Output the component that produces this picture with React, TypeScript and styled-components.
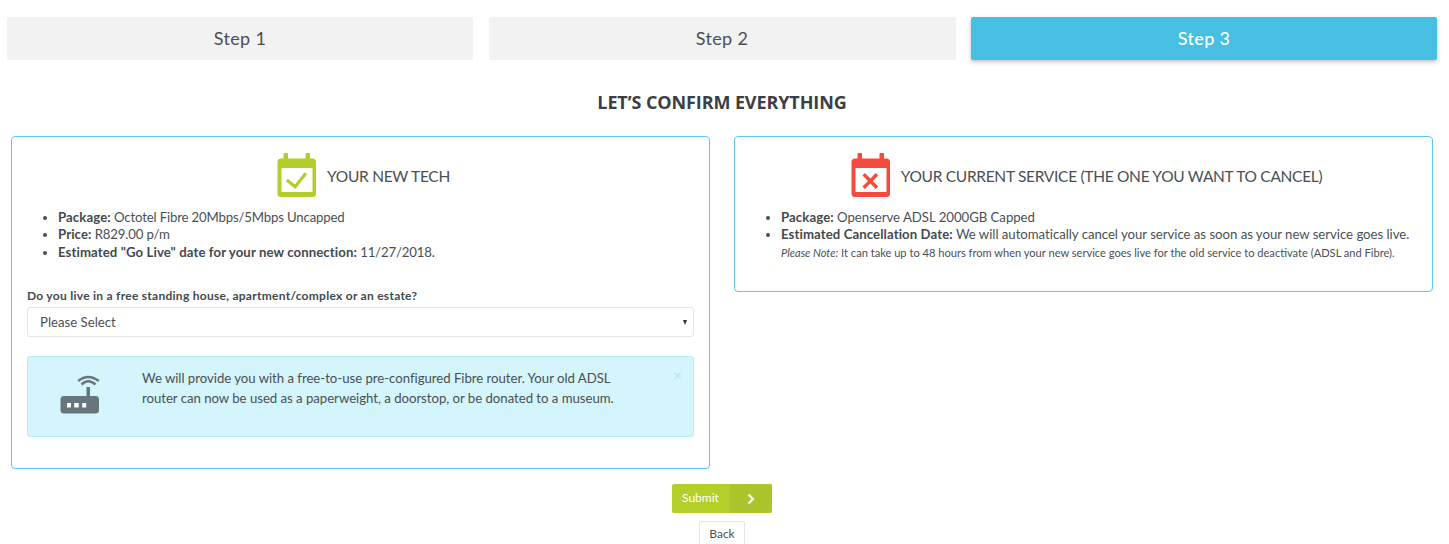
import React from "react";
import styled, { createGlobalStyle } from "styled-components";

const Global = createGlobalStyle`
  html, body { margin: 0; padding: 0; background: #fff; overflow: hidden; }
  body { font-family: "Lato", "Liberation Sans", sans-serif; color: #4a4f54; }
`;
const Page = styled.div`
  width: 1449px; height: 544px; overflow: hidden; box-sizing: border-box; padding-top: 17px;
`;
const Steps = styled.div`
  display: grid; grid-template-columns: 466px 467px 466px; column-gap: 15.5px;
  padding-left: 7px;
`;
const Step = styled.div<{ $active?: boolean }>`
  height: 43px; box-sizing: border-box; padding-bottom: 2px; display: flex; align-items: center; justify-content: center;
  border-radius: 2px; font-size: 18px; letter-spacing: 0.35px;
  background: ${(p) => (p.$active ? "#47bfe3" : "#f2f2f2")};
  color: ${(p) => (p.$active ? "#fff" : "#4a4f54")};
  font-weight: ${(p) => (p.$active ? 500 : 400)};
  box-shadow: ${(p) => (p.$active ? "0 2px 4px rgba(0,0,0,.25)" : "none")};
`;
const Heading = styled.h2`
  margin: 32px 0 24px; padding-right: 5px; height: 20px; line-height: 20px; text-align: center;
  font-family: "Open Sans", sans-serif; font-size: 18px; font-weight: 700; color: #3b3f44;
  letter-spacing: -0.1px;
`;
const Columns = styled.div`
  display: flex; align-items: flex-start; gap: 24px; padding-left: 11px;
`;
const Panel = styled.section<{ $height: number }>`
  width: 699px; height: ${(p) => p.$height}px; box-sizing: border-box;
  border: 1px solid #5ccbe9; border-radius: 4px; padding: 16px 15px 0;
`;
const PanelTitle = styled.div`
  display: flex; align-items: flex-start; justify-content: center; gap: 10px; height: 45px;
  padding-left: 6px; font-size: 15.5px; letter-spacing: -0.3px; color: #4a4f54;
`;
const TitleText = styled.span`
  line-height: 47px;
`;
const Details = styled.ul<{ $spacing: number }>`
  margin: 11px 0 0; padding: 0 0 0 31px; font-size: 13.2px; line-height: 17.4px;
  letter-spacing: ${(p) => p.$spacing}px;
`;
const Strong = styled.b`
  font-weight: 700; color: #44494e; letter-spacing: 0.09px;
`;
const Note = styled.div`
  font-size: 11.1px; line-height: 17px; letter-spacing: 0;
`;
const Question = styled.label`
  display: block; margin-top: 26px; height: 17px; line-height: 17px;
  font-size: 12px; font-weight: 700; color: #44494e; letter-spacing: 0.27px;
`;
const Select = styled.div`
  margin-top: 3px; height: 30px; box-sizing: border-box; padding: 0 6px 0 12px;
  display: flex; align-items: center; justify-content: space-between;
  border: 1px solid #e3e5e7; border-radius: 3px; font-size: 13.2px; background: #fff;
`;
const Caret = styled.span`
  width: 0; height: 0; border-left: 2.5px solid transparent; border-right: 2.5px solid transparent;
  border-top: 5px solid #333;
`;
const Alert = styled.div`
  position: relative; margin-top: 19px; height: 81px; box-sizing: border-box;
  display: flex; align-items: flex-start; padding: 12px 0 0 31.5px; gap: 42.5px;
  background: #d4f5fb; border: 1px solid #b8ecf6; border-radius: 3px;
  font-size: 13.2px; line-height: 19.5px; letter-spacing: -0.03px;
`;
const AlertText = styled.p`
  margin: 0; width: 490px;
`;
const RouterSvg = styled.svg`
  flex: none; margin-top: 5.5px;
`;
const Close = styled.span`
  position: absolute; right: 11px; top: 9px; font-size: 15px; line-height: 18px; color: #bdeaf3;
  font-weight: 700;
`;
const Actions = styled.div`
  display: flex; flex-direction: column; align-items: center; padding-right: 5px;
`;
const Submit = styled.button`
  margin-top: 15px; width: 100px; height: 29px; padding: 0; border: 0; border-radius: 2px;
  display: flex; overflow: hidden; background: #b4cf2a; color: #fff;
  font-family: inherit; font-size: 12px;
`;
const SubmitLabel = styled.span`
  flex: 1; line-height: 28px; text-align: left; padding-left: 10px;
`;
const SubmitArrow = styled.span`
  width: 42px; display: flex; align-items: center; justify-content: center; background: #acc42c;
`;
const Back = styled.button`
  margin-top: 8px; width: 46px; height: 30px; padding: 0 0 5px; background: #fff;
  border: 1px solid #e6e6e6; border-radius: 2px; font-family: inherit; font-size: 12px; color: #4a4f54;
`;

const Calendar = ({ color, children }: { color: string; children: React.ReactNode }) => (
  <svg width="40" height="44" viewBox="0 0 40 44">
    <rect x="6.500" y="0" width="4.500" height="9" rx="1" fill={color} />
    <rect x="28.500" y="0" width="4.500" height="9" rx="1" fill={color} />
    <rect x="0.500" y="5.500" width="38.500" height="38.500" rx="3.500" fill={color} />
    <rect x="4.500" y="15" width="31" height="24" fill="#fff" />
    {children}
  </svg>
);
const Router = () => (
  <RouterSvg width="40" height="40" viewBox="0 0 40 40" fill="none">
    <path d="M18.200 6Q28 -2 38.800 6" stroke="#67757c" strokeWidth="2.500" />
    <path d="M21.500 9.500Q28 3 35.500 9.500" stroke="#67757c" strokeWidth="2.500" />
    <rect x="26.500" y="12" width="3.500" height="12" fill="#67757c" />
    <rect x="0.500" y="21" width="38.500" height="17.500" rx="3.500" fill="#67757c" />
    <rect x="7" y="28" width="4" height="4.500" fill="#fff" />
    <rect x="14.200" y="28" width="4.500" height="4.500" fill="#fff" />
    <rect x="22.200" y="28" width="4" height="4.500" fill="#fff" />
  </RouterSvg>
);

export default function App() {
  return (
    <Page>
      <Global />
      <Steps>
        <Step>Step 1</Step>
        <Step>Step 2</Step>
        <Step $active>Step 3</Step>
      </Steps>
      <Heading>LET’S CONFIRM EVERYTHING</Heading>
      <Columns>
        <Panel $height={333}>
          <PanelTitle>
            <Calendar color="#b1ce2b">
              <path d="M9.800 27l8.400 6.700L28.800 20.300" stroke="#b1ce2b" strokeWidth="3.200" fill="none" />
            </Calendar>
            <TitleText>YOUR NEW TECH</TitleText>
          </PanelTitle>
          <Details $spacing={-0.16}>
            <li><Strong>Package:</Strong> Octotel Fibre 20Mbps/5Mbps Uncapped</li>
            <li><Strong>Price:</Strong> R829.00 p/m</li>
            <li><Strong>Estimated "Go Live" date for your new connection:</Strong> 11/27/2018.</li>
          </Details>
          <Question>Do you live in a free standing house, apartment/complex or an estate?</Question>
          <Select>Please Select<Caret /></Select>
          <Alert>
            <Router />
            <AlertText>We will provide you with a free-to-use pre-configured Fibre router. Your old ADSL router can now be used as a paperweight, a doorstop, or be donated to a museum.</AlertText>
            <Close>×</Close>
          </Alert>
        </Panel>
        <Panel $height={156}>
          <PanelTitle>
            <Calendar color="#f44c3c">
              <path d="M12.700 21.300L26 34.700M26 21.300L12.700 34.700" stroke="#f44c3c" strokeWidth="3.400" fill="none" />
            </Calendar>
            <TitleText>YOUR CURRENT SERVICE (THE ONE YOU WANT TO CANCEL)</TitleText>
          </PanelTitle>
          <Details $spacing={-0.03}>
            <li><Strong>Package:</Strong> Openserve ADSL 2000GB Capped</li>
            <li>
              <Strong>Estimated Cancellation Date:</Strong> We will automatically cancel your service as soon as your new service goes live.
              <Note><i>Please Note:</i> It can take up to 48 hours from when your new service goes live for the old service to deactivate (ADSL and Fibre).</Note>
            </li>
          </Details>
        </Panel>
      </Columns>
      <Actions>
        <Submit>
          <SubmitLabel>Submit</SubmitLabel>
          <SubmitArrow>
            <svg width="10" height="12" viewBox="0 0 10 12"><path d="M2.500 1.500L7 6l-4.500 4.500" stroke="#fff" strokeWidth="2.200" fill="none" /></svg>
          </SubmitArrow>
        </Submit>
        <Back>Back</Back>
      </Actions>
    </Page>
  );
}
